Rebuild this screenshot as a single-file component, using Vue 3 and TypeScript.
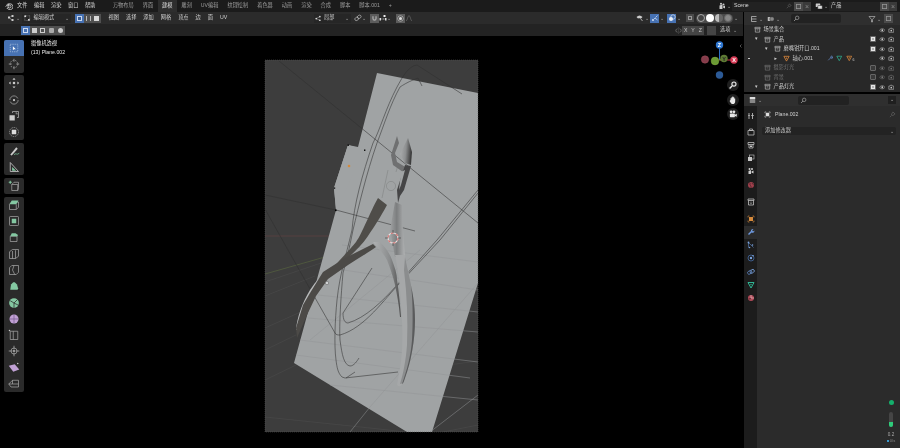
<template>
  <div class="app">
    <div class="topbar">
      <svg class="logo" viewBox="0 0 16 16" v-html="icons.logo"></svg>
      <span v-for="m in menus" :key="m" class="menu">{{ m }}</span>
      <div class="tabs">
        <span v-for="t in tabs" :key="t" class="tab" :class="{ active: t === '建模' }">{{ t }}</span>
      </div>
      <div class="scene">
        <svg class="ic9" viewBox="0 0 16 16" v-html="icons.sceneIc"></svg>
        <span class="caret">⌄</span>
        <div class="scene-field">Scene<svg class="pin" viewBox="0 0 16 16" v-html="icons.pin"></svg></div>
        <span class="sq"></span><span class="x">×</span>
      </div>
      <div class="scene layer">
        <svg class="ic9" viewBox="0 0 16 16" v-html="icons.layers"></svg>
        <span class="caret">⌄</span>
        <div class="scene-field wide">产品</div>
        <span class="sq"></span><span class="x">×</span>
      </div>
    </div>

    <div class="main">
      <div class="left">
        <div class="header">
          <svg class="ic9 first" viewBox="0 0 16 16" v-html="icons.cursor3d"></svg>
          <span class="caret">⌄</span>
          <div class="mode">
            <svg class="ic7" viewBox="0 0 16 16" v-html="icons.editMode"></svg>
            <span>编辑模式</span>
            <span class="caret push">⌄</span>
          </div>
          <div class="selmode">
            <span class="sm on"><i class="sm-v"></i></span>
            <span class="sm"><i class="sm-e"></i></span>
            <span class="sm"><i class="sm-f"></i></span>
          </div>
          <div class="hmenu">
            <span v-for="m in editMenus" :key="m">{{ m }}</span>
          </div>
          <div class="pivot">
            <svg class="ic7" viewBox="0 0 16 16" v-html="icons.orient"></svg>
            <span>局部</span>
            <span class="caret push">⌄</span>
          </div>
          <svg class="ic9 link" viewBox="0 0 16 16" v-html="icons.linkIc"></svg>
          <span class="caret">⌄</span>
          <span class="snapbtn"><svg viewBox="0 0 16 16" v-html="icons.magnet"></svg></span>
          <svg class="ic9" viewBox="0 0 16 16" v-html="icons.snapTo"></svg>
          <span class="caret">⌄</span>
          <span class="snapbtn prop"><i></i></span>
          <svg class="ic9" viewBox="0 0 16 16" v-html="icons.falloff"></svg>
          <div class="rightgroup">
            <svg class="ic9" viewBox="0 0 16 16" v-html="icons.gizmoEye"></svg>
            <span class="caret">⌄</span>
            <span class="bluebtn"><svg viewBox="0 0 16 16" v-html="icons.gizmo"></svg></span>
            <span class="caret">⌄</span>
            <span class="bluebtn gap"><svg viewBox="0 0 16 16" v-html="icons.overlay"></svg></span>
            <span class="caret">⌄</span>
            <span class="xray"></span>
            <div class="shading">
              <span v-for="s in shadings" :key="s" :class="['shade', s]"></span>
            </div>
            <span class="caret">⌄</span>
          </div>
        </div>

        <div class="subheader">
          <div class="boxmodes">
            <span v-for="(b, i) in 5" :key="b" class="bm" :class="{ on: i === 0 }"><i :class="'bm' + i"></i></span>
          </div>
          <div class="axes">
            <svg class="ic8" viewBox="0 0 16 16" v-html="icons.mirror"></svg>
            <span class="axis">X</span><span class="axis">Y</span><span class="axis">Z</span>
            <span class="axis dots"></span>
            <span class="opts">选项 <span class="caret">⌄</span></span>
          </div>
        </div>

        <div class="viewport">
          <svg class="scene3d" viewBox="0 36 743 412">
            <defs>
              <clipPath id="cam"><rect x="265" y="60" width="213" height="372" /></clipPath>
              <linearGradient id="neck" x1="0" x2="1" y1="0" y2="0">
                <stop offset="0" stop-color="#a0a2a3" />
                <stop offset="0.45" stop-color="#7c7e7f" />
                <stop offset="1" stop-color="#b0b2b3" />
              </linearGradient>
              <linearGradient id="blade" x1="0" x2="1" y1="0" y2="0.2">
                <stop offset="0" stop-color="#b0b2b3" />
                <stop offset="0.55" stop-color="#8d8f90" />
                <stop offset="1" stop-color="#3d3d3d" />
              </linearGradient>
              <linearGradient id="arm" x1="0" x2="1" y1="0" y2="0">
                <stop offset="0" stop-color="#b0b2b3" />
                <stop offset="0.6" stop-color="#8a8c8d" />
                <stop offset="1" stop-color="#4c4c4c" />
              </linearGradient>
            </defs>
            <g clip-path="url(#cam)">
              <rect x="265" y="60" width="213" height="372" fill="#3d3d3d" />
              <path d="M265 236H345" stroke="#6a4444" stroke-width="0.6" />
              <path d="M265 274L332 255" stroke="#5b6a40" stroke-width="0.6" />
              <path v-for="(g, i) in floorDark" :key="'d' + i" :d="g" stroke="#4e4f4f" stroke-width="0.5" fill="none" />
              <!-- the plane with its small flap -->
              <path d="M377 73L478 93V283L432 432H407L294 363L336 210L334 188L348 145L358 147Z" fill="#a0a3a4" />
              <path d="M348 145L365 150L336 210L334 188Z" fill="#a0a3a4" />
              <path v-for="(g, i) in floorLight" :key="'l' + i" :d="g" stroke="#929596" stroke-width="0.5" fill="none" />
              <path v-for="(l, i) in blackLines" :key="'b' + i" :d="l" stroke="#2f3030" stroke-width="0.55" fill="none" />
              <circle cx="349" cy="166" r="1.3" fill="#d28a3c" />
              <rect x="347.5" y="144.5" width="1.4" height="1.4" fill="#000" />
              <rect x="364" y="149.5" width="1.4" height="1.4" fill="#000" />
              <rect x="334" y="187.5" width="1.2" height="1.2" fill="#000" />
              <rect x="335" y="209.5" width="1.6" height="1.6" fill="#000" />

              <!-- pliers -->
              <path d="M388 170L382 198M398 165L396 172" stroke="#7c7e7f" stroke-width="0.5" fill="none" />
              <circle cx="391" cy="186" r="4.6" fill="none" stroke="#7c7e7f" stroke-width="0.5" />
              <path d="M296 330C297 318 302 303 310 290C316 281 322 274 330 268L316 293L305 312L298 330Z" fill="#b8babb" />
              <path d="M378 198L387 205C380 218 374 227 368 236C362 245 354 252 346 260L333 268C340 259 350 250 356 242C362 234 370 212 378 198Z" fill="#4f4d49" />
              <path d="M373 244L376 247C366 254 357 259 348 265L328 279L316 296L307 315L297 338L296 328L303 305L310 293L323 272L345 258Z" fill="#4c4a47" />
              <circle cx="327" cy="283" r="1.7" fill="#d0d2d3" stroke="#5a5a5a" stroke-width="0.5" />
              <path d="M373 242L380 242C386 248 390 254 392 260C395 268 397 274 397 280C399 292 400 305 401 317L400 317C399 305 397 295 395 285C393 276 390 268 387 260C384 254 378 248 373 242Z" fill="url(#arm)" />
              <path d="M395 202L402 205L403 230L405 257L395 257L390 230Z" fill="url(#neck)" />
              <path d="M395 255C398 270 400 285 401 305C403 330 403 350 400 368L397 385C400 388 402 386 405 378C411 362 415 340 415 320C415 300 410 280 405 255Z" fill="#a6a8a9" />
              <path d="M404 270C407 295 408 320 407 345C406 360 403 375 400 384C403 384 404 381 405 378C411 362 415 340 415 320C415 300 410 280 405 257Z" fill="#8b8d8e" />
              <path d="M411 285C413 300 413 325 412 340C411 355 407 370 402 384C403 384 404 381 405 378C411 362 415 340 415 320C415 305 413 295 410 280Z" fill="#5a5b5c" />
              <path d="M397 136L391 155L393 165L403 172L407 168L397 162L395 153L399 143Z" fill="#6f7071" />
              <path d="M408 138L400 154L405 163L411 165L412 152Z" fill="url(#blade)" />
              <path d="M405 165L411 166L404 190L400 196L398 203L397 190Z" fill="#454546" />
              <path d="M401 172L405 170L401 185L399 190Z" fill="#a0a3a4" />
              <!-- 3d cursor -->
              <circle cx="393" cy="238" r="5" fill="none" stroke="#efe6e6" stroke-width="1.1" />
              <circle cx="393" cy="238" r="5" fill="none" stroke="#d8716f" stroke-width="1.1" stroke-dasharray="2.6 2.6" />
              <path d="M385 238H388M398 238H401M393 230V233M393 243V246" stroke="#3a3a3a" stroke-width="0.6" />
            </g>
            <rect x="265" y="60" width="213" height="372" fill="none" stroke="#5a5a5a" stroke-width="0.5" stroke-dasharray="1 1" />

            <!-- nav gizmo -->
            <path d="M719.5 60V47" stroke="#2e72c6" stroke-width="1" />
            <path d="M719.5 60H732" stroke="#d0344f" stroke-width="1" />
            <path d="M719.5 60L724 59" stroke="#7a9a30" stroke-width="1" />
            <circle cx="705" cy="59.5" r="3.7" fill="#843c4a" stroke="#a04a5a" stroke-width="0.5" />
            <circle cx="719.5" cy="75" r="3.7" fill="#2c5a96" />
            <circle cx="724" cy="58.5" r="3.7" fill="#5e7a34" />
            <text x="724" y="60.5" class="gz dark">Y</text>
            <circle cx="715" cy="61" r="3.9" fill="#6b9a34" stroke="#84b040" stroke-width="0.4" />
            <circle cx="719.5" cy="45" r="3.7" fill="#2e76d0" />
            <text x="719.5" y="47" class="gz">Z</text>
            <circle cx="734" cy="60" r="3.7" fill="#d63a55" />
            <text x="734" y="62" class="gz">X</text>
            <path d="M741.5 44.5L740 46L741.5 47.5" stroke="#888" stroke-width="0.6" fill="none" />
          </svg>

          <div class="overlay-text">
            <div>摄像机透视</div>
            <div>(13) Plane.002</div>
          </div>

          <div class="tools">
            <div v-for="(group, gi) in toolGroups" :key="gi" class="toolgroup">
              <span v-for="(t, ti) in group" :key="ti" class="tool" :class="{ on: t === 'select' }">
                <svg viewBox="0 0 16 16" v-html="icons[t]"></svg>
              </span>
            </div>
          </div>

          <div class="navbtns">
            <span v-for="n in navIcons" :key="n" class="navbtn"><svg viewBox="0 0 16 16" v-html="icons[n]"></svg></span>
          </div>
        </div>
      </div>

      <div class="right">
        <div class="outliner">
          <div class="ohead">
            <svg class="ic9" viewBox="0 0 16 16" v-html="icons.tree"></svg>
            <span class="caret">⌄</span>
            <svg class="ic9 m" viewBox="0 0 16 16" v-html="icons.display"></svg>
            <span class="caret">⌄</span>
            <div class="search"><svg viewBox="0 0 16 16" v-html="icons.searchIc"></svg></div>
            <svg class="ic9 filter" viewBox="0 0 16 16" v-html="icons.funnel"></svg>
            <span class="caret">⌄</span>
            <span class="sq newc"></span>
          </div>
          <div v-for="r in rows" :key="r.name" class="row" :class="{ muted: r.muted }">
            <span class="cell-dot" :style="{ width: r.left + 'px' }"><i v-if="r.dot"></i></span>
            <span class="arrow" :class="r.arrow">{{ r.arrow ? '▾' : '' }}</span>
            <svg class="ric" viewBox="0 0 16 16" v-html="r.mesh ? icons.tri : icons.box"></svg>
            <span class="rname">{{ r.name }}</span>
            <template v-if="r.mesh">
              <svg class="mini" viewBox="0 0 16 16" v-html="icons.wrenchSm"></svg>
              <svg class="mini" viewBox="0 0 16 16" v-html="icons.triGreen"></svg>
              <svg class="mini" viewBox="0 0 16 16" v-html="icons.tri"></svg>
              <span class="six">6</span>
            </template>
            <div class="vis">
              <template v-if="r.check !== undefined">
                <span class="check" :class="{ on: r.check }"></span>
              </template>
              <svg class="v" viewBox="0 0 16 16" v-html="icons.eye"></svg>
              <svg class="v" viewBox="0 0 16 16" v-html="icons.cam"></svg>
            </div>
          </div>
        </div>

        <div class="props">
          <div class="phead">
            <svg class="ic9" viewBox="0 0 16 16" v-html="icons.propsIc"></svg>
            <span class="caret">⌄</span>
            <div class="search small"><svg viewBox="0 0 16 16" v-html="icons.searchIc"></svg></div>
            <span class="collapse">⌄</span>
          </div>
          <div class="pbody">
            <div class="ptabs">
              <div v-for="(g, i) in propTabs" :key="i" class="ptgroup">
                <span v-for="t in g" :key="t" class="ptab" :class="{ on: t === 'pWrench' }">
                  <svg viewBox="0 0 16 16" v-html="icons[t]"></svg>
                </span>
              </div>
            </div>
            <div class="pcontent">
              <div class="objname">
                <svg viewBox="0 0 16 16" v-html="icons.objSel"></svg>
                <span>Plane.002</span>
                <svg class="pin2" viewBox="0 0 16 16" v-html="icons.pin"></svg>
              </div>
              <div class="addmod"><span>添加修改器</span><span class="caret">⌄</span></div>
              <div class="status">
                <span class="gdot"></span>
                <span class="slider"><i></i></span>
                <span class="num">0.2</span>
                <span class="num sub"><i></i>0/s</span>
              </div>
            </div>
          </div>
        </div>
      </div>
    </div>
  </div>
</template>

<script setup lang="ts">
interface OutRow {
  name: string
  left: number
  arrow?: string
  dot?: boolean
  mesh?: boolean
  muted?: boolean
  check?: boolean
}

const menus = ['文件', '编辑', '渲染', '窗口', '帮助']
const tabs = ['万物布局', '界面', '建模', '雕刻', 'UV编辑', '纹理绘制', '着色器', '动画', '渲染', '合成', '脚本', '脚本.001', '+']
const editMenus = ['视图', '选择', '添加', '网格', '顶点', '边', '面', 'UV']
const shadings = ['wire', 'solid', 'mat', 'rend']
const navIcons = ['zoomIc', 'hand', 'camIc']

const toolGroups = [
  ['select', 'cursor'],
  ['move', 'rotate', 'scale', 'transform'],
  ['annotate', 'measure'],
  ['addCube'],
  ['extrude', 'inset', 'bevel', 'loopcut', 'knife', 'polybuild', 'spin', 'smooth', 'slide', 'shrink', 'shear', 'rip'],
]

const rows: OutRow[] = [
  { name: '场景集合', left: 1 },
  { name: '产品', left: 11, arrow: 'open', check: true },
  { name: '磨嘴钳开口.001', left: 21, arrow: 'open', check: true },
  { name: '轴心.001', left: 30, arrow: 'closed', dot: true, mesh: true },
  { name: '摄影灯光', left: 11, muted: true, check: false },
  { name: '背景', left: 11, muted: true, check: false },
  { name: '产品灯光', left: 11, arrow: 'open', check: true },
]

const propTabs = [
  ['pTool'],
  ['pRender', 'pOutput', 'pView', 'pScene', 'pWorld'],
  ['pColl'],
  ['pObj', 'pWrench', 'pParts', 'pPhys', 'pCons', 'pData', 'pMat'],
]

const ln = 'fill="none" stroke="#d0d0d0" stroke-width="1.1"'
const wire = 'fill="none" stroke="#b0b0b0" stroke-width="0.9"'
const mint = '#84c8a2'

const icons: Record<string, string> = {
  logo: `<circle cx="9" cy="9" r="3" fill="none" stroke="#ddd" stroke-width="1.6"/><path d="M1 9L8 4M3 6H9M4 13L8 9M5 4L10 3.5A6 6 0 1 1 4.5 12" fill="none" stroke="#ddd" stroke-width="1.5"/>`,
  sceneIc: `<path d="M3 14V7L9 5V14Z" fill="#ccc"/><circle cx="6" cy="3.5" r="2" fill="#ccc"/><circle cx="11" cy="5" r="2" fill="#ccc"/><path d="M10 9L14 7V13L10 11Z" fill="#ccc"/>`,
  layers: `<rect x="1.5" y="3" width="9" height="7" rx="1" fill="#ccc"/><rect x="5.5" y="7" width="9" height="7" rx="1" fill="#ddd" stroke="#222"/>`,
  pin: `<path d="M9 2L14 7L11.5 7.5L9 11L5 7L8.5 4.5ZM6 10L2 14" fill="none" stroke="#777" stroke-width="1.1"/>`,
  cursor3d: `<rect x="2" y="5" width="4" height="4" fill="#ccc"/><rect x="9" y="2" width="4" height="4" fill="#ccc"/><rect x="9" y="10" width="4" height="4" fill="#ccc"/><path d="M6 7L9 4M6 8L9 12" stroke="#ccc"/>`,
  editMode: `<path d="M2 2H14V14H2Z" fill="none" stroke="#d8d8d8" stroke-dasharray="2 1.5"/><rect x="1" y="1" width="4" height="4" fill="#ddd"/><rect x="10" y="10" width="4" height="4" fill="#ddd"/>`,
  orient: `<circle cx="3" cy="9" r="2" fill="#ddd"/><circle cx="12" cy="4" r="2" fill="#ddd"/><circle cx="12" cy="13" r="2" fill="#ddd"/><path d="M3 9L12 4M3 9L12 13" stroke="#ddd"/>`,
  linkIc: `<rect x="1.5" y="7" width="8" height="6" rx="3" transform="rotate(-35 5 10)" ${ln}/><rect x="6.5" y="3" width="8" height="6" rx="3" transform="rotate(-35 10 6)" ${ln}/>`,
  magnet: `<path d="M3 3V8A5 5 0 0 0 13 8V3H10V8A2 2 0 0 1 6 8V3Z" fill="#aaa"/>`,
  snapTo: `<rect x="9" y="2" width="4" height="4" fill="#eee"/><path d="M2 10H14" stroke="#ddd" stroke-dasharray="2 1" stroke-width="1.5"/><rect x="1" y="8" width="3" height="5" fill="#ddd"/><rect x="12" y="8" width="3" height="5" fill="#ddd"/>`,
  falloff: `<path d="M2 14C5 14 5 3 8 3C11 3 11 14 14 14" ${wire} stroke-opacity=".7"/>`,
  gizmoEye: `<path d="M1 6C5 2 9 2 13 6L10 9C8 8 6 8 4 9Z" fill="#ccc"/><path d="M9 9L13 14" stroke="#ccc" stroke-width="1.5"/>`,
  gizmo: `<path d="M3 13L8 8M3 13H6M3 13V10M9 7L13 3M8 8L13 12" stroke="#dfe9f5" stroke-width="1.4" fill="none"/>`,
  overlay: `<circle cx="6" cy="10" r="4" fill="#e8eef6"/><circle cx="10" cy="6" r="4.5" fill="none" stroke="#e8eef6" stroke-width="1.3"/>`,
  mirror: `<path d="M8 1V15" stroke="#888" stroke-dasharray="1.5 1"/><path d="M6 4L2 6V10L6 12M10 4L14 6V10L10 12" ${wire}/>`,
  tree: `<path d="M3 3H13M6 8H13M6 13H13M3 3V13H6M3 8H6" fill="none" stroke="#ccc" stroke-width="1.4"/>`,
  display: `<rect x="1.5" y="4" width="10" height="8" rx="1" fill="#bbb"/><circle cx="10" cy="8" r="4.5" fill="#888" stroke="#222"/>`,
  searchIc: `<circle cx="9.5" cy="6.5" r="4" fill="none" stroke="#bbb" stroke-width="1.3"/><path d="M6.5 9.5L2.5 13.5" stroke="#bbb" stroke-width="1.6"/>`,
  funnel: `<path d="M2 3H14L9 9V14H7V9Z" fill="none" stroke="#c8c8c8" stroke-width="1.2"/>`,
  box: `<path d="M2 3H14V6H2ZM3 6.5V14H13V6.5M6 9H10" fill="none" stroke="#c8c8c8" stroke-width="1.4"/>`,
  tri: `<path d="M2 3H14L8 14Z" fill="none" stroke="#e08a3c" stroke-width="1.8"/><circle cx="8" cy="7" r="1.5" fill="#e08a3c"/>`,
  triGreen: `<path d="M2 3H14L8 14Z" fill="none" stroke="#2fb594" stroke-width="1.8"/>`,
  wrenchSm: `<path d="M3 13L9 7M9 7A3 3 0 0 1 13 3L11 5.5L12.5 7L14.5 5A3 3 0 0 1 9 7" fill="none" stroke="#6a93d6" stroke-width="1.6"/>`,
  eye: `<path d="M1 8C5 3 11 3 15 8C11 13 5 13 1 8Z" fill="none" stroke="#ccc" stroke-width="1.2"/><circle cx="8" cy="8" r="2.2" fill="#ccc"/>`,
  cam: `<path d="M2 5H5L6 3H10L11 5H14V13H2Z" fill="none" stroke="#ccc" stroke-width="1.3"/><circle cx="8" cy="9" r="2" fill="#ccc"/>`,
  propsIc: `<rect x="1.5" y="2" width="11" height="5" rx="1" fill="#ddd"/><rect x="1.5" y="8" width="11" height="6" rx="1" fill="#888"/>`,
  objSel: `<rect x="4" y="4" width="8" height="8" fill="#ddd"/><path d="M2 5V2H5M11 2H14V5M14 11V14H11M5 14H2V11" fill="none" stroke="#ddd" stroke-width="1.2"/>`,
  pTool: `<path d="M4 2V14M2.5 7H5.5M11 2V5L9 7H13L11 5M11 7V14" fill="none" stroke="#ccc" stroke-width="1.6"/>`,
  pRender: `<path d="M2 5H14V14H2ZM5 2H11V5H5Z" fill="none" stroke="#c8c8c8" stroke-width="1.4"/>`,
  pOutput: `<path d="M2 3H14V7H2ZM4 7V14H12V7" fill="none" stroke="#c8c8c8" stroke-width="1.5"/><rect x="6" y="9" width="4" height="3" fill="#c8c8c8"/>`,
  pView: `<rect x="5" y="2" width="9" height="8" fill="none" stroke="#c8c8c8" stroke-width="1.2"/><rect x="2" y="6" width="8" height="8" fill="#c8c8c8"/>`,
  pScene: `<path d="M3 14V8L8 6V14Z" fill="#ccc"/><circle cx="5" cy="4" r="2" fill="#ccc"/><circle cx="10" cy="4" r="2" fill="#ccc"/><path d="M9 9L13 7V13L9 11Z" fill="#ccc"/>`,
  pWorld: `<circle cx="8" cy="8" r="6" fill="#a0404c"/><path d="M5 3C8 5 4 8 7 9C9 10 7 13 9 14M11 4C10 6 13 7 13.5 8" stroke="#3a2226" stroke-width="1.4" fill="none"/>`,
  pColl: `<path d="M2 2H14V5H2ZM3 5.5V14H13V5.5" fill="none" stroke="#c8c8c8" stroke-width="1.5"/><path d="M8 7V11M6 9.5L8 11.5L10 9.5" stroke="#c8c8c8" fill="none"/>`,
  pObj: `<rect x="4" y="4" width="8" height="8" fill="#d58a3c"/><path d="M2 5V2H5M11 2H14V5M14 11V14H11M5 14H2V11" fill="none" stroke="#d58a3c" stroke-width="1.2"/>`,
  pWrench: `<path d="M3 13L9 7" stroke="#6f9ae0" stroke-width="3"/><path d="M8 7A4 4 0 0 1 13 2L10.5 5L12 7L15 5A4 4 0 0 1 9 9Z" fill="#6f9ae0"/>`,
  pParts: `<path d="M3 3L13 13M3 3V13" stroke="#5d86c4" stroke-width="1.2" fill="none"/><circle cx="3" cy="3" r="1.8" fill="#7ba3dd"/><circle cx="11" cy="8" r="1.6" fill="#7ba3dd"/><circle cx="5" cy="13" r="1.6" fill="#7ba3dd"/>`,
  pPhys: `<circle cx="8" cy="8" r="6" fill="none" stroke="#4a75b6" stroke-width="1.4"/><circle cx="8" cy="8" r="2.4" fill="#7ba3dd"/><circle cx="12" cy="3.5" r="1.6" fill="#7ba3dd"/>`,
  pCons: `<rect x="1" y="6" width="9" height="6" rx="3" transform="rotate(-35 5 9)" fill="none" stroke="#5d86c4" stroke-width="1.6"/><rect x="6" y="4" width="9" height="6" rx="3" transform="rotate(-35 10 7)" fill="none" stroke="#7ba3dd" stroke-width="1.6"/>`,
  pData: `<path d="M2 3H14L8 14Z" fill="none" stroke="#2fb594" stroke-width="2"/><circle cx="8" cy="7" r="1.4" fill="#2fb594"/>`,
  pMat: `<circle cx="8" cy="8" r="6" fill="#b04a58"/><path d="M8 2V8H14" fill="none" stroke="#e8c8cc" stroke-width="1.2"/><path d="M2.5 9C5 12 7 12 8 8" fill="#5c2c34"/>`,
  zoomIc: `<circle cx="9.5" cy="6.5" r="4.2" fill="#e8e8e8"/><circle cx="9.5" cy="6.5" r="2.4" fill="#2a2a2a"/><path d="M6.5 9.5L2.5 13.5" stroke="#e8e8e8" stroke-width="2.4"/>`,
  hand: `<path d="M4 8V5H5.5V7.5V3.5H7V7V2.5H8.5V7V3.5H10V8V5.5H11.5V10C11.5 13 10 14.5 8 14.5C6 14.5 5 13.5 4 12L2.5 9.5L3.5 8.5Z" fill="#e8e8e8"/>`,
  camIc: `<rect x="3" y="7" width="8" height="6" rx="1" fill="#e8e8e8"/><circle cx="5" cy="4.5" r="2.2" fill="#e8e8e8"/><circle cx="9.5" cy="4.5" r="2.2" fill="#e8e8e8"/><path d="M11 9L14 7.5V12.5L11 11Z" fill="#e8e8e8"/>`,
  select: `<path d="M3 3H13V13H3Z" fill="none" stroke="#c6d6ef" stroke-width=".8" stroke-dasharray="1.6 1.3"/><path d="M6.5 5.5V11L8 9.5H10.5Z" fill="#fff"/>`,
  cursor: `<circle cx="8" cy="8" r="5" ${wire} stroke-dasharray="2 1.5"/><path d="M8 1V5M8 11V15M1 8H5M11 8H15" stroke="#a8a8a8"/>`,
  move: `<path d="M8 1L10 3.5H6ZM8 15L10 12.5H6ZM1 8L3.5 6V10ZM15 8L12.5 6V10Z" fill="#ccc"/><rect x="6.5" y="6.5" width="3" height="3" fill="#ccc"/>`,
  rotate: `<circle cx="8" cy="8" r="5.5" ${wire}/><circle cx="8" cy="8" r="1.5" fill="#ccc"/><path d="M1 9H4M12 7H15" stroke="#2a2a2a" stroke-width="2"/>`,
  scale: `<rect x="2" y="7" width="7" height="7" fill="#ccc"/><path d="M6 4V2H14V10H12M10 4H12V6" fill="none" stroke="#b0b0b0"/>`,
  transform: `<circle cx="8" cy="8" r="6" ${wire} stroke-dasharray="2 1"/><rect x="5" y="5" width="6" height="6" fill="#ddd"/>`,
  annotate: `<path d="M3 13L11 3L13 5L5 14Z" fill="#ccc"/><path d="M8 13C10 10 12 14 15 11" stroke="#7fc89f" fill="none"/>`,
  measure: `<path d="M3 2V14H14Z" fill="none" stroke="#bbb" stroke-width="1.2"/><path d="M5.5 8L11 13H5.5Z" fill="${mint}"/>`,
  addCube: `<path d="M5 6H13V14H5Z" ${wire}/><path d="M5 6L8 3H14V10L13 14" ${wire}/><path d="M3 1V5M1 3H5" stroke="${mint}" stroke-width="1.4"/>`,
  extrude: `<path d="M2 7L5 4H14V11L11 14H2Z" ${wire}/><path d="M2 7L5 2H14L11 7Z" fill="${mint}"/><path d="M11 7V14" ${wire}/>`,
  inset: `<rect x="2" y="2" width="12" height="12" rx="1" ${wire}/><rect x="5" y="5" width="6" height="6" fill="${mint}"/>`,
  bevel: `<path d="M3 7V14H12V7Z" ${wire}/><path d="M3 7L5 3H10L13 5V7Z" fill="${mint}"/>`,
  loopcut: `<path d="M2 5L6 2H14V11L10 14H2Z" ${wire}/><path d="M6 4V14M10 3V14" ${wire}/>`,
  knife: `<path d="M2 5L5 2H14V11L11 14H2Z" ${wire}/><path d="M8 2L6 8L9 14" ${wire}/>`,
  polybuild: `<path d="M3 13L4 6L8 2L12 6L14 13Z" fill="${mint}"/><rect x="7" y="1" width="2" height="2" fill="#222"/><rect x="13" y="12" width="2" height="2" fill="#222"/>`,
  spin: `<circle cx="8" cy="8" r="6.5" fill="${mint}"/><path d="M8 8L3 5M8 8L13 3M8 8V15M8 8L14 11" stroke="#2a2a2a"/>`,
  smooth: `<circle cx="8" cy="8" r="6" fill="#c0a0d4"/><path d="M2 8H14M8 2V14" stroke="#7a5c90" fill="none"/>`,
  slide: `<path d="M3 3H13V14H3Z" ${wire}/><path d="M7 3V14" ${wire}/><circle cx="2" cy="2" r="1" fill="#ccc"/>`,
  shrink: `<circle cx="8" cy="8" r="4" ${wire}/><path d="M8 1V6M8 10V15M1 8H6M10 8H15" stroke="#b0b0b0"/><circle cx="8" cy="8" r="1.2" fill="#ccc"/>`,
  shear: `<path d="M1 5L9 3L15 10L7 13Z" fill="#c0a0d4"/><circle cx="13" cy="2" r="1" fill="#ccc"/>`,
  rip: `<path d="M1 8L6 3H14V12H4Z" ${wire}/><path d="M6 3V8L1 8M6 8H14" ${wire}/>`,
}

const floorDark = [
  'M265 282L330 260', 'M265 296L315 276', 'M265 328L305 310', 'M265 350L296 335',
  'M265 380L296 365', 'M265 417L370 428L478 440', 'M345 432L300 470',
  'M443 432L478 425', 'M448 365L478 361',
]
const floorLight = [
  'M318 295L478 312', 'M308 318L478 332', 'M300 340L478 362', 'M296 355L470 378',
  'M330 268L478 290', 'M342 245L478 262', 'M330 385L478 400', 'M370 407L478 283',
  'M430 432L478 395', 'M310 340L420 250', 'M350 432L370 407',
]
const blackLines = [
  'M279 61L478 223',
  'M265 195L336 210L415 231',
  'M265 209L288 250L335 333',
  'M462 94L417 65C408 66 402 78 397 87C385 110 380 130 373 143C362 175 354 205 352 230C345 260 340 273 337 300C335 320 334 345 336 360C337 368 338 373 342 377L345 378L398 372',
  'M422 86L418 78L413 80C408 82 403 85 400 87C390 105 384 125 377 143C366 175 359 205 353 230C349 250 346 262 343 273C341 295 339 325 340 340C342 355 344 365 350 366C354 366 357 361 359 358',
  'M372 268L343 313C343 320 345 323 348 323C365 318 382 302 397 285L437 240L478 190',
  'M335 333C336 335 338 335 340 335C365 328 385 298 400 283L440 240L478 193',
  'M346 378L355 372',
]
</script>

<style>
html, body {
  margin: 0;
  background: #000;
}
</style>

<style scoped>
.app {
  width: 900px;
  height: 448px;
  display: flex;
  flex-direction: column;
  overflow: hidden;
  background: #000;
  color: #cfcfcf;
  font-family: "Liberation Sans", "Noto Sans CJK SC", sans-serif;
  font-size: 5.2px;
  line-height: 1;
  filter: blur(0.3px);
}
svg {
  display: block;
  flex-shrink: 0;
}
.ic9 { width: 8px; height: 8px; }
.ic8 { width: 7px; height: 7px; }
.ic7 { width: 6.5px; height: 6.5px; }
.caret {
  font-size: 5px;
  color: #aaa;
  width: 5px;
  text-align: center;
  line-height: 4px;
  flex-shrink: 0;
}
.push { margin-left: auto; }

.topbar {
  height: 12px;
  background: #1b1b1b;
  display: flex;
  align-items: center;
  padding-left: 5px;
}
.logo { width: 8px; height: 8px; margin-right: 4px; }
.menu { margin-right: 6.6px; width: 10.4px; color: #d8d8d8; }
.tabs {
  display: flex;
  align-items: stretch;
  height: 12px;
  margin-left: 6.5px;
  color: #9d9d9d;
}
.tab {
  padding: 0 4.5px;
  display: flex;
  align-items: center;
  white-space: nowrap;
}
.tab.active {
  background: #2e2e2e;
  color: #e0e0e0;
}
.scene {
  display: flex;
  align-items: center;
  margin-left: auto;
  height: 9px;
  gap: 0;
}
.scene.layer { margin-left: 4px; margin-right: 3px; }
.scene-field {
  width: 62px;
  height: 9px;
  background: #222;
  color: #d8d8d8;
  display: flex;
  align-items: center;
  justify-content: space-between;
  padding: 0 2px;
  margin-left: 1px;
  box-sizing: border-box;
}
.scene-field.wide { width: 51px; }
.pin { width: 6px; height: 6px; }
.sq {
  width: 9px;
  height: 9px;
  background: #4a4a4a;
  box-sizing: border-box;
  border: 2px solid #4a4a4a;
  box-shadow: inset 0 0 0 0.7px #999;
}
.x {
  width: 8px;
  height: 9px;
  background: #3a3a3a;
  color: #888;
  font-size: 7px;
  text-align: center;
  line-height: 9px;
}

.main {
  flex: 1;
  display: flex;
  min-height: 0;
}
.left {
  width: 743px;
  display: flex;
  flex-direction: column;
}
.header {
  height: 12px;
  background: #2b2b2b;
  display: flex;
  align-items: center;
}
.first { margin-left: 7px; }
.mode {
  width: 49px;
  height: 9px;
  margin-left: 2px;
  background: #262626;
  display: flex;
  align-items: center;
  gap: 3px;
  padding: 0 2px;
  box-sizing: border-box;
}
.selmode {
  display: flex;
  margin-left: 4px;
}
.sm {
  width: 8.7px;
  height: 9px;
  background: #505050;
  display: flex;
  align-items: center;
  justify-content: center;
}
.sm.on { background: #4772b3; }
.sm i { display: block; width: 5px; height: 5px; box-sizing: border-box; }
.sm-v { border: 0.7px solid #cdd9ee; background: #3c5f94; }
.sm-e { border-left: 1px solid #bbb; border-right: 1px solid #bbb; }
.sm-f { background: #d8d8d8; }
.hmenu {
  display: flex;
  gap: 7px;
  margin-left: 7.5px;
  width: 120px;
  color: #d0d0d0;
}
.pivot {
  width: 37px;
  height: 9px;
  margin-left: 85px;
  background: #262626;
  display: flex;
  align-items: center;
  gap: 3px;
  padding: 0 1px;
  box-sizing: border-box;
}
.link { margin-left: 3px; }
.snapbtn {
  width: 9px;
  height: 9px;
  background: #5c5c5c;
  margin-left: 3px;
  display: flex;
  align-items: center;
  justify-content: center;
}
.snapbtn svg { width: 7px; height: 7px; }
.snapbtn.prop { margin-left: 4px; }
.snapbtn.prop i { width: 3px; height: 3px; border-radius: 50%; background: #ddd; box-shadow: 0 0 0 1px #5c5c5c, 0 0 0 1.5px #bbb; }
.rightgroup {
  margin-left: auto;
  margin-right: 5px;
  display: flex;
  align-items: center;
}
.bluebtn {
  width: 9px;
  height: 9px;
  background: #4772b3;
  margin-left: 1px;
  display: flex;
  align-items: center;
  justify-content: center;
}
.bluebtn.gap { margin-left: 3px; }
.bluebtn svg { width: 8px; height: 8px; }
.xray {
  width: 8px;
  height: 8px;
  margin-left: 5px;
  background: #4a4a4a;
  box-shadow: inset 0 0 0 2px #4a4a4a, inset 0 0 0 3px #999;
}
.shading {
  display: flex;
  margin-left: 2px;
  background: #4a4a4a;
  border-radius: 5px;
  padding: 0.5px 1px;
  gap: 1px;
}
.shade {
  width: 8px;
  height: 8px;
  border-radius: 50%;
  box-sizing: border-box;
}
.shade.wire { border: 1px solid #aaa; background: #444; }
.shade.solid { background: #fff; }
.shade.mat { background: linear-gradient(90deg, #bbb 50%, #666 50%); }
.shade.rend { background: #888; border: 1px solid #666; }

.subheader {
  height: 12px;
  background: #232323;
  display: flex;
  align-items: center;
}
.boxmodes {
  display: flex;
  margin-left: 21px;
}
.bm {
  width: 8.8px;
  height: 9px;
  background: #505050;
  display: flex;
  align-items: center;
  justify-content: center;
}
.bm.on { background: #4772b3; }
.bm i { display: block; width: 5px; height: 5px; box-sizing: border-box; }
.bm0 { border: 0.7px dashed #cdd9ee; }
.bm1 { background: #ccc; }
.bm2 { border: 1px solid #ccc; }
.bm3 { background: #aaa; border-radius: 1px; }
.bm4 { background: #ccc; border-radius: 50%; }
.axes {
  margin-left: auto;
  margin-right: 3px;
  display: flex;
  align-items: center;
}
.axis {
  width: 7.3px;
  height: 9px;
  background: #454545;
  color: #c8c8c8;
  text-align: center;
  line-height: 9px;
}
.axis.dots { width: 9px; margin-left: 3px; }
.opts {
  margin-left: 4px;
  width: 20px;
  display: flex;
  gap: 2px;
  align-items: center;
}

.viewport {
  flex: 1;
  position: relative;
  background: #000;
  overflow: hidden;
}
.scene3d {
  position: absolute;
  inset: 0;
  width: 743px;
  height: 412px;
}
.gz {
  font-size: 5.5px;
  fill: #fff;
  text-anchor: middle;
  font-weight: bold;
}
.gz.dark { fill: #222; }
.overlay-text {
  position: absolute;
  left: 31px;
  top: 5px;
  color: #e8e8e8;
  display: flex;
  flex-direction: column;
  gap: 4px;
}
.tools {
  position: absolute;
  left: 4px;
  top: 4px;
  width: 19.5px;
  display: flex;
  flex-direction: column;
  gap: 2.5px;
}
.toolgroup {
  background: #2a2a2a;
  border-radius: 2px;
  overflow: hidden;
}
.tool {
  height: 16.3px;
  display: flex;
  align-items: center;
  justify-content: center;
}
.tool.on { background: #4772b3; }
.tool svg { width: 12px; height: 12px; }
.navbtns {
  position: absolute;
  left: 727px;
  top: 43px;
  display: flex;
  flex-direction: column;
  gap: 2.5px;
}
.navbtn {
  width: 12px;
  height: 12px;
  border-radius: 50%;
  background: #1f1f1f;
  display: flex;
  align-items: center;
  justify-content: center;
}
.navbtn svg { width: 10px; height: 10px; }

.right {
  width: 157px;
  display: flex;
  flex-direction: column;
  gap: 2px;
  padding-left: 1px;
  box-sizing: border-box;
  background: #000;
}
.outliner {
  height: 80px;
  flex-shrink: 0;
  background: #282828;
  overflow: hidden;
}
.ohead {
  height: 13px;
  background: #2f2f2f;
  display: flex;
  align-items: center;
  padding-left: 6px;
}
.m { margin-left: 4px; }
.search {
  width: 50px;
  height: 9px;
  margin-left: 11px;
  background: #222;
  border-radius: 2px;
  display: flex;
  align-items: center;
  padding-left: 2px;
  box-sizing: border-box;
}
.search svg { width: 7px; height: 7px; }
.filter { margin-left: 27px; }
.newc { margin-left: 3px; }
.row {
  height: 9.5px;
  display: flex;
  align-items: center;
  color: #cfcfcf;
  position: relative;
}
.row.muted { color: #707070; }
.row.muted svg.ric, .row.muted svg.v { opacity: 0.5; }
.cell-dot {
  flex-shrink: 0;
  display: flex;
  align-items: center;
}
.cell-dot i {
  width: 1.5px;
  height: 1.5px;
  background: #ddd;
  border-radius: 50%;
  margin-left: 4px;
}
.arrow {
  width: 9px;
  font-size: 4.5px;
  color: #ccc;
  flex-shrink: 0;
}
.arrow.closed { transform: rotate(-90deg); transform-origin: 2px 50%; }
.ric { width: 7px; height: 7px; margin-right: 2.5px; }
.rname { white-space: nowrap; }
.mini { width: 6.5px; height: 6.5px; margin-left: 3px; }
.row svg.mini:nth-of-type(2) { margin-left: 14px; }
.six { font-size: 3.5px; margin-top: 4px; color: #ccc; }
.vis {
  position: absolute;
  right: 6px;
  top: 1.5px;
  display: flex;
  align-items: center;
  gap: 2.5px;
}
.check {
  width: 6px;
  height: 6px;
  border-radius: 1px;
  background: #3a3a3a;
  border: 0.5px solid #666;
  box-sizing: border-box;
}
.check.on {
  background: #e6e6e6;
  box-shadow: inset 0 0 0 1.4px #e6e6e6, inset 0 0 0 3px #333;
}
.v { width: 6.5px; height: 6.5px; }

.props {
  flex: 1;
  background: #2b2b2b;
  display: flex;
  flex-direction: column;
  min-height: 0;
}
.phead {
  height: 12px;
  background: #2f2f2f;
  display: flex;
  align-items: center;
  padding-left: 5px;
}
.search.small { margin-left: 36px; width: 51px; }
.collapse {
  margin-left: auto;
  margin-right: 4px;
  width: 8px;
  height: 8px;
  background: #1f1f1f;
  color: #bbb;
  text-align: center;
  line-height: 6px;
}
.pbody {
  flex: 1;
  display: flex;
  min-height: 0;
}
.ptabs {
  width: 13px;
  background: #1c1c1c;
  display: flex;
  flex-direction: column;
  padding-top: 3px;
  gap: 3px;
  flex-shrink: 0;
}
.ptgroup {
  display: flex;
  flex-direction: column;
}
.ptgroup:nth-child(n+3) { margin-top: 1px; }
.ptab {
  height: 13.2px;
  display: flex;
  align-items: center;
  justify-content: center;
}
.ptab.on { background: #2b2b2b; }
.ptab svg { width: 8px; height: 8px; }
.pcontent {
  flex: 1;
  position: relative;
  padding: 4px 4px 0 5px;
  min-width: 0;
}
.objname {
  display: flex;
  align-items: center;
  gap: 4px;
  height: 9px;
  color: #d0d0d0;
  padding-left: 2px;
}
.objname svg { width: 7px; height: 7px; }
.objname .pin2 { margin-left: auto; }
.addmod {
  margin-top: 8px;
  height: 8px;
  background: #232323;
  border-radius: 2px;
  display: flex;
  align-items: center;
  justify-content: space-between;
  padding: 0 2px 0 3px;
  color: #c8c8c8;
}
.status {
  position: absolute;
  right: 2px;
  bottom: 5px;
  width: 14px;
  display: flex;
  flex-direction: column;
  align-items: center;
}
.gdot {
  width: 5px;
  height: 5px;
  border-radius: 50%;
  background: #14b06c;
}
.slider {
  margin-top: 7px;
  width: 4px;
  height: 15px;
  background: #454545;
  border-radius: 2px;
  display: flex;
  align-items: flex-end;
  overflow: hidden;
}
.slider i { width: 4px; height: 4.5px; background: #2ecc7a; }
.num { margin-top: 6px; font-size: 4.6px; color: #aaa; }
.num.sub { margin-top: 1.5px; font-size: 4px; color: #8a8a8a; display: flex; align-items: center; gap: 1px; }
.num.sub i { width: 2px; height: 2px; background: #3a9ad0; }
</style>
